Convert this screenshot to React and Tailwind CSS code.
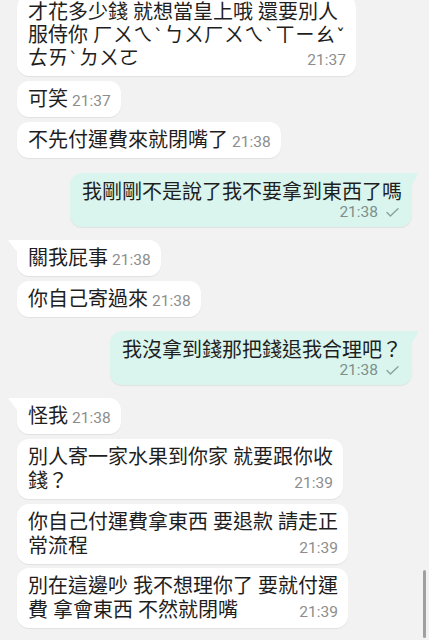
import React from "react";

const Time = ({ t, className = "" }) => (
  <span className={"text-[15.5px] leading-[16px] text-[#8d8d8d] whitespace-nowrap " + className}>{t}</span>
);

const Tone = ({ c }) => (
  <span className="inline-block h-[20px] leading-[20px] font-['DejaVu_Sans',sans-serif] text-[18px] mx-[1px]">{c}</span>
);

const InTail = () => (
  <svg className="absolute left-[-9px] top-0" width="10" height="13" viewBox="0 0 10 13">
    <path d="M10 0 H1.5 Q0 0 0.8 1.2 L10 13 Z" fill="#ffffff" />
  </svg>
);

const OutTail = () => (
  <svg className="absolute right-[-7px] top-0" width="8" height="13" viewBox="0 0 8 13">
    <path d="M0 0 H6.5 Q8 0 7.2 1.2 L0 13 Z" fill="#d9f5ee" />
  </svg>
);

function InSingle({ text, t, tail, mt }) {
  return (
    <div className={"relative self-start ml-[17px] bg-white rounded-[12px] pl-[11px] pr-[10px] py-[6px] shadow-[0_1px_1px_rgba(0,0,0,0.07)] flex items-baseline " + (tail ? "rounded-tl-none " : "") + mt}>
      {tail && <InTail />}
      <span className="text-[20px] leading-[24px] text-[#1e1e1e] whitespace-nowrap">{text}</span>
      <Time t={t} className="ml-[4px]" />
    </div>
  );
}

function InMulti({ lines, t, mt, lh = "leading-[24px]" }) {
  const last = lines[lines.length - 1];
  return (
    <div className={"relative self-start ml-[17px] bg-white rounded-[12px] pl-[11px] pr-[10px] py-[6px] shadow-[0_1px_1px_rgba(0,0,0,0.07)] " + mt}>
      {lines.slice(0, -1).map((l, i) => (
        <div key={i} className={"text-[20px] text-[#1e1e1e] whitespace-nowrap " + lh}>{l}</div>
      ))}
      <div className="flex items-baseline justify-between">
        <span className={"text-[20px] text-[#1e1e1e] whitespace-nowrap " + lh}>{last}</span>
        <Time t={t} className="ml-[4px]" />
      </div>
    </div>
  );
}

function Out({ text, t, mt }) {
  return (
    <div className={"relative self-end mr-[17px] bg-[#d9f5ee] rounded-[12px] rounded-tr-none pl-[12px] pr-[10px] pt-[7px] pb-[7px] shadow-[0_1px_1px_rgba(0,0,0,0.07)] " + mt}>
      <OutTail />
      <div className="text-[20px] leading-[24px] text-[#1e1e1e] whitespace-nowrap">{text}</div>
      <div className="flex items-center justify-end pr-[3px] h-[16px]">
        <span className="text-[15.5px] leading-[16px] text-[#7d8f8b]">{t}</span>
        <svg className="ml-[8px] mt-[1px]" width="13" height="9" viewBox="0 0 13 9">
          <path d="M1 4.6 L4.4 8 L12 0.8" fill="none" stroke="#86a39d" strokeWidth="1.4" strokeLinecap="round" strokeLinejoin="round" />
        </svg>
      </div>
    </div>
  );
}

export default function App() {
  return (
    <div className="relative w-full h-[640px] overflow-hidden bg-[#f2f2f2] font-['Roboto','Noto_Sans_CJK_TC',sans-serif]">
      <div className="flex flex-col">
        <InMulti
          mt="mt-[-5px]"
          lh="leading-[23px]"
          lines={[
            "才花多少錢 就想當皇上哦 還要別人",
            <>服侍你 ㄏㄨㄟ<Tone c="ˋ" />ㄅㄨㄏㄨㄟ<Tone c="ˋ" />ㄒㄧㄠ<Tone c="ˇ" /></>,
            <>ㄊㄞ<Tone c="ˋ" />ㄉㄨㄛ</>,
          ]}
          t="21:37"
        />
        <InSingle mt="mt-[5px]" text="可笑" t="21:37" />
        <InSingle mt="mt-[5px]" text="不先付運費來就閉嘴了" t="21:38" />
        <Out mt="mt-[15px]" text="我剛剛不是說了我不要拿到東西了嗎" t="21:38" />
        <InSingle mt="mt-[13px]" tail text="關我屁事" t="21:38" />
        <InSingle mt="mt-[5px]" text="你自己寄過來" t="21:38" />
        <Out mt="mt-[14px]" text="我沒拿到錢那把錢退我合理吧？" t="21:38" />
        <InSingle mt="mt-[13px]" tail text="怪我" t="21:38" />
        <InMulti mt="mt-[5px]" lines={["別人寄一家水果到你家 就要跟你收", "錢？"]} t="21:39" />
        <InMulti mt="mt-[5px]" lines={["你自己付運費拿東西 要退款 請走正", "常流程"]} t="21:39" />
        <InMulti mt="mt-[4px]" lines={["別在這邊吵 我不想理你了 要就付運", "費 拿會東西 不然就閉嘴"]} t="21:39" />
      </div>
      <div className="absolute left-[423px] top-[570px] w-[3px] h-[68px] rounded-full bg-[#a0a0a0]" />
    </div>
  );
}
